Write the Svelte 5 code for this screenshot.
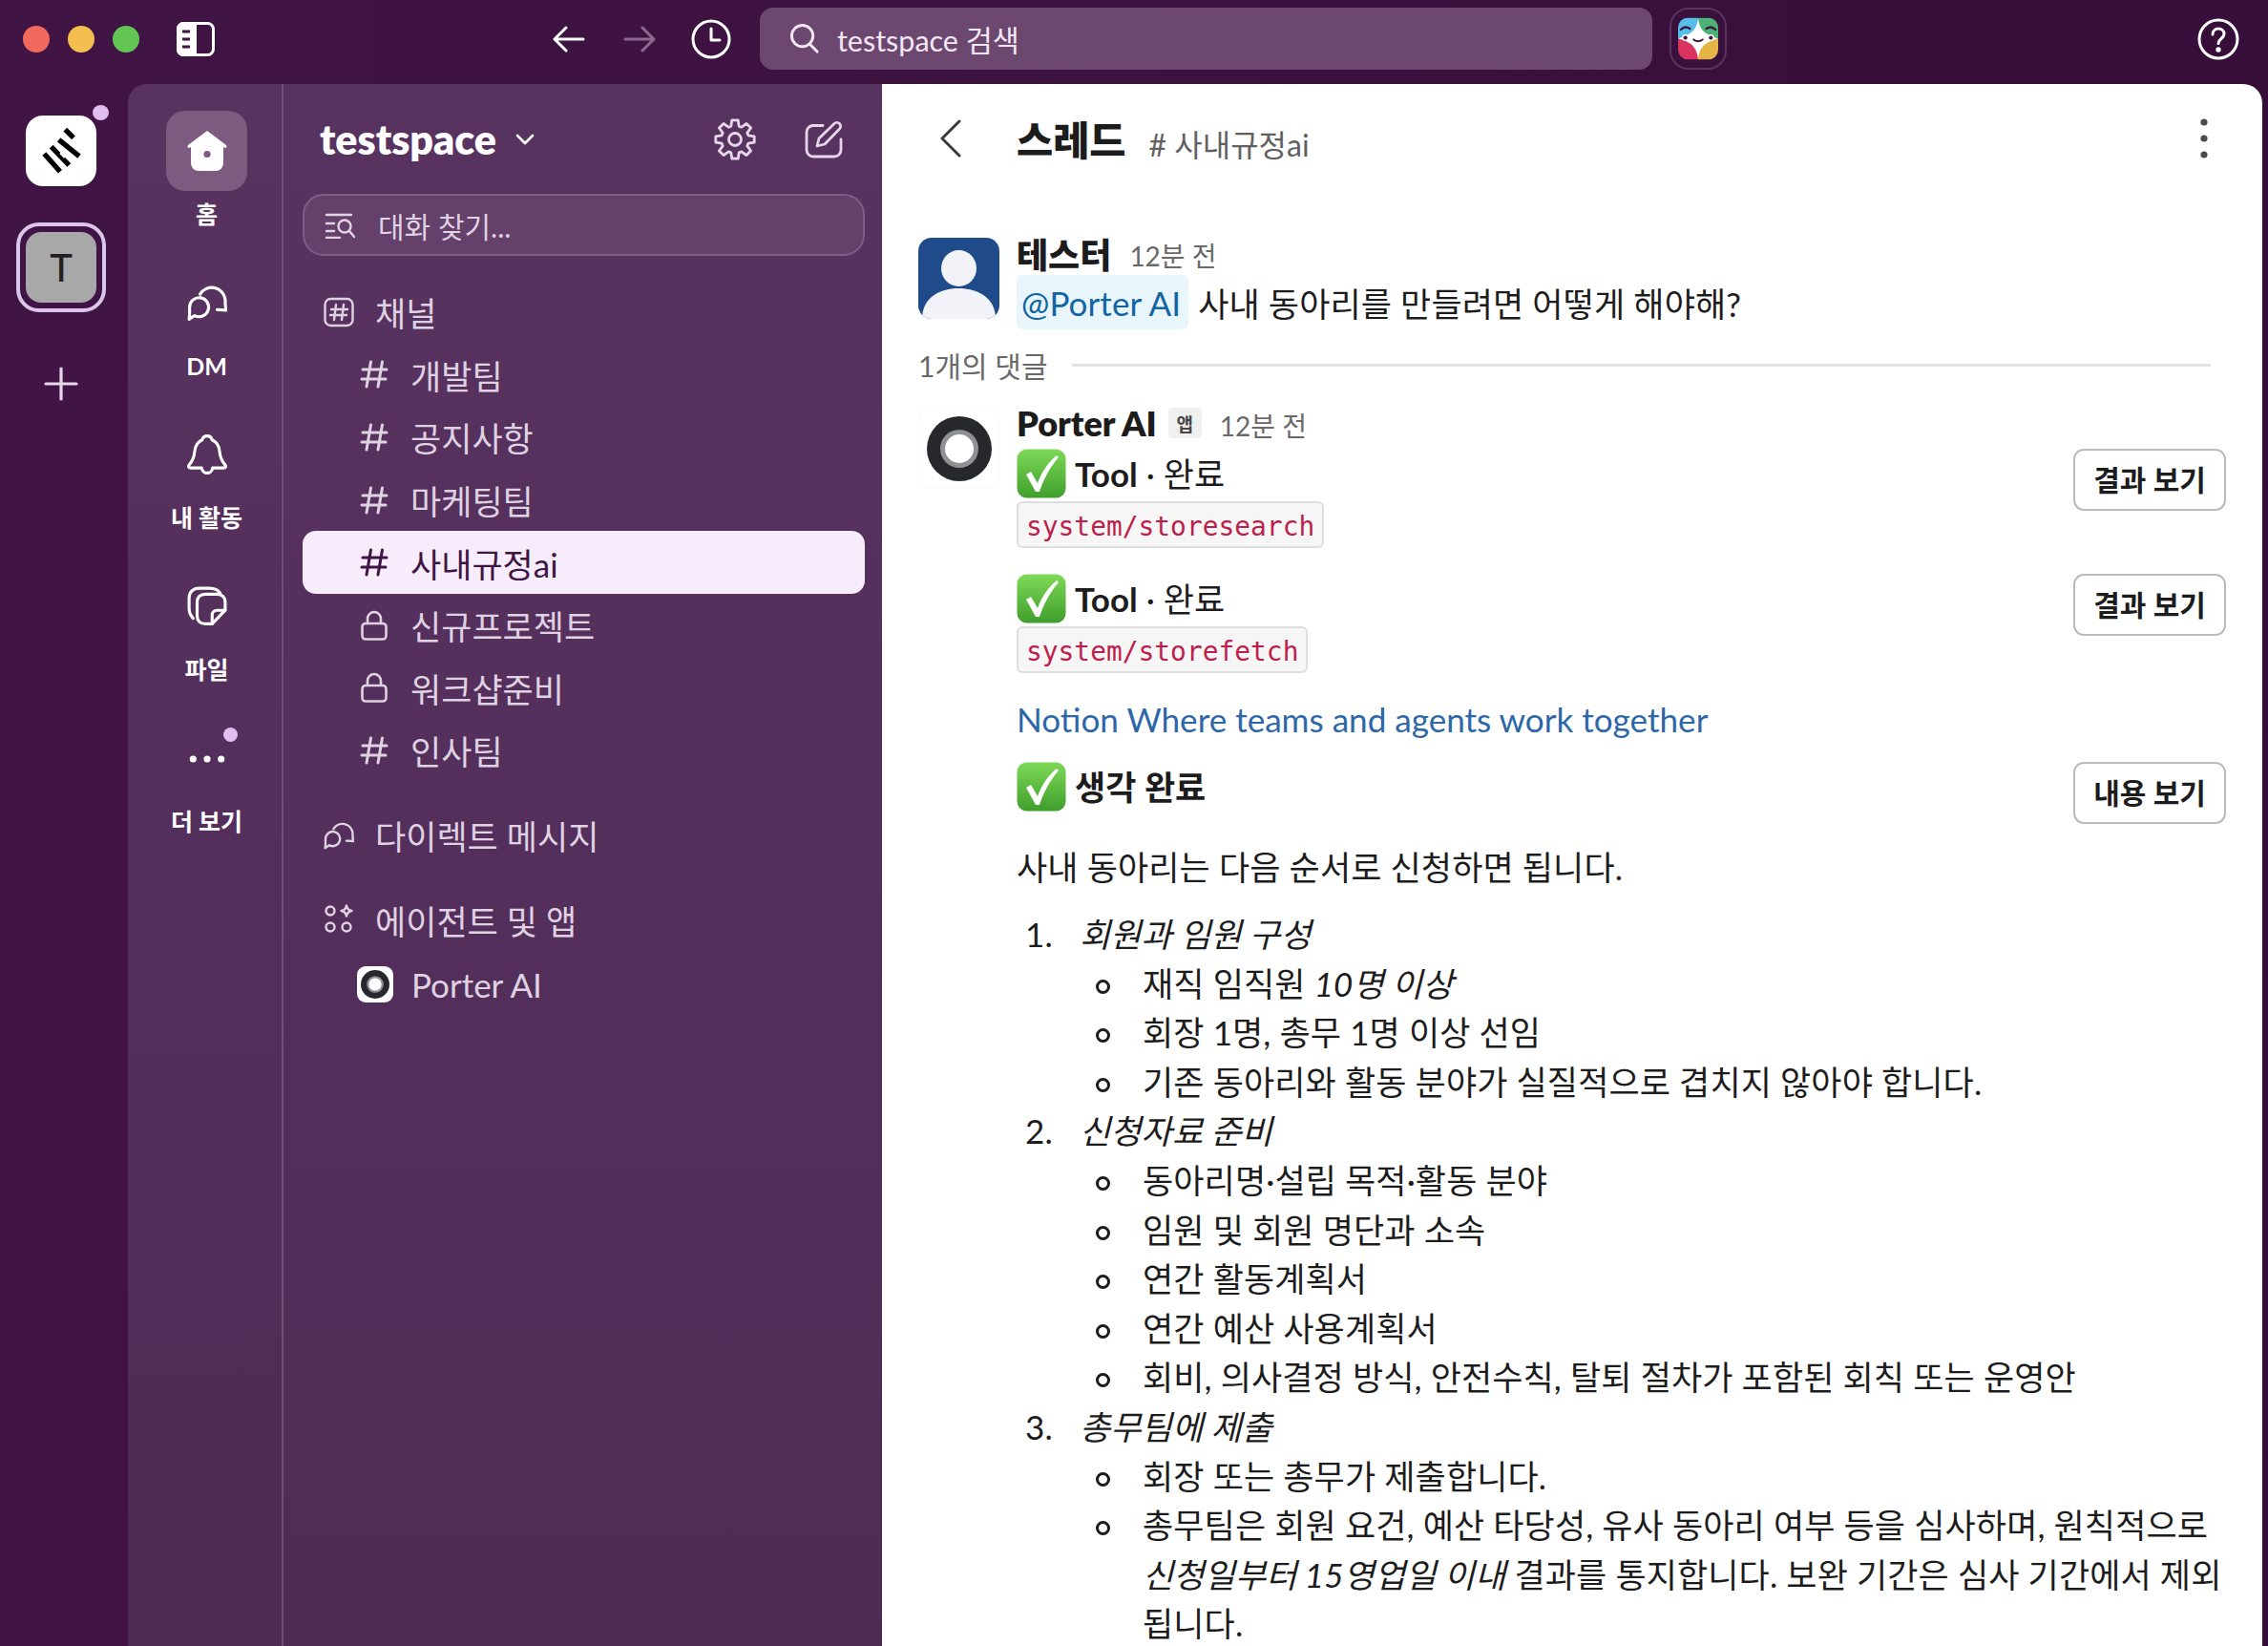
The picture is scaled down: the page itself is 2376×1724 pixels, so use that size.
<script>
    // Sidebar data
    const navItems = [
        { key: "home", label: "홈", active: true },
        { key: "dm", label: "DM" },
        { key: "bell", label: "내 활동" },
        { key: "files", label: "파일" },
        { key: "more", label: "더 보기" }
    ];

    const channels = [
        { name: "개발팀", icon: "hash" },
        { name: "공지사항", icon: "hash" },
        { name: "마케팅팀", icon: "hash" },
        { name: "사내규정ai", icon: "hash", active: true },
        { name: "신규프로젝트", icon: "lock" },
        { name: "워크샵준비", icon: "lock" },
        { name: "인사팀", icon: "hash" }
    ];

    const tools = ["system/storesearch", "system/storefetch"];

    const firstSub = ["회장 1명, 총무 1명 이상 선임", "기존 동아리와 활동 분야가 실질적으로 겹치지 않아야 합니다."];
    const secondSub = [
        "동아리명·설립 목적·활동 분야",
        "임원 및 회원 명단과 소속",
        "연간 활동계획서",
        "연간 예산 사용계획서",
        "회비, 의사결정 방식, 안전수칙, 탈퇴 절차가 포함된 회칙 또는 운영안"
    ];

    // Builds the 8 toothed outline of the settings gear
    const gearPath = () => {
        const point = (r, deg) => {
            const a = (deg * Math.PI) / 180;
            return `${(22 + r * Math.cos(a)).toFixed(1)} ${(22 + r * Math.sin(a)).toFixed(1)}`;
        };
        let d = "";
        for (let i = 0; i < 8; i++) {
            const c = i * 45;
            d += `${i ? "L" : "M"}${point(14.5, c - 17)}L${point(20.5, c - 9)}L${point(20.5, c + 9)}L${point(14.5, c + 17)}`;
        }
        return d + "Z";
    };
</script>

{#snippet check()}
    <svg class="check" viewBox="0 0 52 52">
        <defs>
            <linearGradient id="green" x1="0" y1="0" x2="0" y2="1">
                <stop offset="0" stop-color="#7ed957" />
                <stop offset="1" stop-color="#3f9e2c" />
            </linearGradient>
        </defs>
        <rect x="0.5" y="0.5" width="51" height="51" rx="10" fill="url(#green)" />
        <path d="M10 27l5-3 7 12C26 25 33 14 42 7l2 2C36 18 29 30 24 45h-4z" fill="#fff" />
    </svg>
{/snippet}

{#snippet icon(name)}
    {#if name === "hash"}
        <svg class="ico" viewBox="0 0 30 30" fill="none" stroke="currentColor" stroke-width="3" stroke-linecap="round">
            <path d="M11.500 2L7 28M23.500 2L19 28M3 10h25M2 20h25" />
        </svg>
    {:else if name === "lock"}
        <svg class="ico" viewBox="0 0 30 32" fill="none" stroke="currentColor" stroke-width="2.600" stroke-linejoin="round">
            <rect x="2.500" y="14" width="25" height="16.500" rx="3.500" />
            <path d="M8 14V9a7 7 0 0114 0v5" />
        </svg>
    {:else if name === "channels"}
        <svg class="ico" viewBox="0 0 32 32" fill="none" stroke="currentColor" stroke-width="2.400" stroke-linecap="round">
            <rect x="1.500" y="2" width="29" height="28" rx="6" />
            <path d="M13 8l-2 16M21 8l-2 16M8 13h17M7 19h17" />
        </svg>
    {:else if name === "dm"}
        <svg class="ico" viewBox="0 0 40 39" fill="none" stroke="currentColor" stroke-width="3" stroke-linecap="round" stroke-linejoin="round">
            <path d="M13 11A13.500 13.500 0 0138 16c0 4 0 8 1 11l-9-.5" />
            <path d="M2.500 24a9.500 9.500 0 115 8.400L2 36c.8-4 .5-8 .5-12z" />
        </svg>
    {:else if name === "agents"}
        <svg class="ico" viewBox="0 0 32 32" fill="none" stroke="currentColor" stroke-width="2.400">
            <circle cx="7" cy="7" r="4.500" />
            <circle cx="7" cy="24" r="4.500" />
            <circle cx="24" cy="24" r="4.500" />
            <path d="M24 1.500c.7 3.700 2 5 5.500 5.500-3.500.5-4.800 1.800-5.500 5.500-.7-3.700-2-5-5.500-5.500 3.500-.5 4.800-1.800 5.500-5.500z" stroke-linejoin="round" />
        </svg>
    {:else if name === "home"}
        <svg class="ico" viewBox="0 0 42 42">
            <path d="M21 0l20 15c1 1 .5 3-1 3l-2-1v16c0 5-3 9-8 9H12c-5 0-8-4-8-9V17l-2 1c-1.500 0-2-2-1-3z" fill="#fff" />
            <circle cx="21" cy="24.500" r="3.600" fill="#7d5a80" />
        </svg>
    {:else if name === "bell"}
        <svg class="ico" viewBox="0 0 40 40" fill="none" stroke="currentColor" stroke-width="3" stroke-linejoin="round" stroke-linecap="round">
            <path d="M20 1.500c3 0 4.500 2 5 4 5 2 7 6 7.500 12 .5 7 3 10 5.500 13 1 1.500.5 3-1.500 3H25.500c-.5 3-3 5-5.500 5s-5-2-5.500-5H3.500c-2 0-2.500-1.500-1.500-3 2.500-3 5-6 5.500-13C8 11.500 10 7.500 15 5.500c.5-2 2-4 5-4z" />
        </svg>
    {:else if name === "files"}
        <svg class="ico" viewBox="0 0 40 40" fill="none" stroke="currentColor" stroke-width="3" stroke-linejoin="round" stroke-linecap="round">
            <path d="M6 32c-3-3-4-6-4-10V12C2 6 6 2 12 2h10c5 0 9 1.500 11 5" />
            <path d="M18 8h12c5 0 8 3 8 8v8L25 37.500h-7c-5 0-8-3-8-8V16c0-5 3-8 8-8z" />
            <path d="M38 24h-8c-3 0-5 2-5 5v8.500" />
        </svg>
    {:else if name === "more"}
        <svg class="ico" viewBox="0 0 40 40" fill="#fff">
            <circle cx="6" cy="21" r="3.400" />
            <circle cx="20" cy="21" r="3.400" />
            <circle cx="34" cy="21" r="3.400" />
        </svg>
    {/if}
{/snippet}

{#snippet tire(size)}
    <svg viewBox="0 0 68 68" width={size} height={size}>
        <circle cx="34" cy="34" r="34" fill="#26282c" />
        <circle cx="34" cy="34" r="20" fill="#8f9194" />
        <circle cx="34" cy="34" r="15" fill="#fff" />
    </svg>
{/snippet}

<div class="window">
    <header class="titlebar">
        <div class="lights">
            <span class="light red"></span>
            <span class="light yellow"></span>
            <span class="light green"></span>
        </div>
        <svg class="panel-toggle" viewBox="0 0 40 36">
            <rect x="1.500" y="1.500" width="37" height="33" rx="6" fill="none" stroke="#fff" stroke-width="3" />
            <path d="M7 0h14v36H7a7 7 0 01-7-7V7a7 7 0 017-7z" fill="#fff" />
            <path d="M6 10h8M6 18h8M6 26h8" stroke="#3f1543" stroke-width="3" />
        </svg>
        <svg class="nav-arrow" viewBox="0 0 34 28" fill="none" stroke="#fff" stroke-width="3" stroke-linecap="round" stroke-linejoin="round">
            <path d="M32 14H3M14 2L2 14l12 12" />
        </svg>
        <svg class="nav-arrow forward" viewBox="0 0 34 28" fill="none" stroke="#8a6a8e" stroke-width="3" stroke-linecap="round" stroke-linejoin="round">
            <path d="M2 14h29M20 2l12 12-12 12" />
        </svg>
        <svg class="history" viewBox="0 0 42 42" fill="none" stroke="#fff" stroke-width="3" stroke-linecap="round" stroke-linejoin="round">
            <circle cx="21" cy="21" r="19" />
            <path d="M21 10v12h9" />
        </svg>
        <div class="global-search">
            <svg viewBox="0 0 34 34" fill="none" stroke="#f3e8f4" stroke-width="3" stroke-linecap="round">
                <circle cx="15" cy="14" r="11.500" />
                <path d="M23 23l8 8" />
            </svg>
            <span>testspace 검색</span>
        </div>
        <div class="app-logo">
            <svg viewBox="0 0 44 46">
                <defs>
                    <clipPath id="tile"><rect width="44" height="46" rx="11" /></clipPath>
                </defs>
                <g clip-path="url(#tile)">
                    <rect width="22" height="23" fill="#55bde8" />
                    <rect x="22" width="22" height="23" fill="#4bb174" />
                    <rect y="23" width="22" height="23" fill="#d9335f" />
                    <rect x="22" y="23" width="22" height="23" fill="#e4b544" />
                    <path d="M22 0c1 11 5 18 22 23-17 4-21 12-22 23-1-11-5-19-22-23C17 18 21 11 22 0z" fill="#fff" />
                    <path d="M3 13c3-3 7-3 10-1M31 12c3-2 7-2 10 1" fill="none" stroke="#3b1440" stroke-width="2.400" stroke-linecap="round" />
                    <circle cx="8" cy="22" r="3.600" fill="#fff" />
                    <circle cx="36" cy="22" r="3.600" fill="#fff" />
                    <circle cx="8" cy="22" r="2.200" fill="#3b1440" />
                    <circle cx="36" cy="22" r="2.200" fill="#3b1440" />
                    <path d="M17 24c2 2.500 8 2.500 10 0" fill="none" stroke="#3b1440" stroke-width="2" stroke-linecap="round" />
                </g>
            </svg>
        </div>
        <svg class="help" viewBox="0 0 44 44" fill="none" stroke="#fff" stroke-width="3" stroke-linecap="round">
            <circle cx="22" cy="22" r="20" />
            <path d="M16 17c0-4 3-6 6-6s6 2 6 5.500c0 5-6 5-6 10" />
            <circle cx="22" cy="33" r="1.200" fill="#fff" />
        </svg>
    </header>

    <div class="body">
        <aside class="workspaces">
            <div class="ws-logo">
                <svg viewBox="0 0 130 150" fill="none" stroke="#000" stroke-width="16">
                    <path d="M12 84l50 56M34 62l56 58M58 40l64 52M78 8l26 26" />
                    <path d="M60 84l14-14 14 14-14 14z" fill="#fff" stroke="none" />
                </svg>
                <span class="ws-dot"></span>
            </div>
            <div class="ws-selected"><span class="ws-t">T</span></div>
            <svg class="ws-add" viewBox="0 0 36 36" fill="none" stroke="#e6d8ea" stroke-width="3.200" stroke-linecap="round">
                <path d="M18 2v32M2 18h32" />
            </svg>
        </aside>

        <nav class="rail">
            {#each navItems as item}
                <div class="rail-item">
                    <div class="rail-btn" class:active={item.active}>
                        {@render icon(item.key)}
                        {#if item.key === "more"}<span class="more-dot"></span>{/if}
                    </div>
                    <span class="rail-label">{item.label}</span>
                </div>
            {/each}
        </nav>

        <section class="sidebar">
            <div class="side-head">
                <span class="team">testspace</span>
                <svg class="team-chevron" viewBox="0 0 20 12" fill="none" stroke="#fff" stroke-width="2.600" stroke-linecap="round" stroke-linejoin="round">
                    <path d="M2 2l8 8 8-8" />
                </svg>
                <svg class="gear" viewBox="0 0 44 44" fill="none" stroke="#e6d8ea" stroke-width="2.800" stroke-linejoin="round">
                    <path d={gearPath()} />
                    <circle cx="22" cy="22" r="6.500" />
                </svg>
                <svg class="compose" viewBox="0 0 40 40" fill="none" stroke="#e6d8ea" stroke-width="2.800" stroke-linecap="round" stroke-linejoin="round">
                    <path d="M19 5.500H9a7 7 0 00-7 7V31a7 7 0 007 7h22a7 7 0 007-7V20" />
                    <path d="M13 27l2-8L31 3.500a3.500 3.500 0 015.500 5.500L21 25z" />
                </svg>
            </div>
            <div class="side-search">
                <svg viewBox="0 0 34 28" fill="none" stroke="#e0d3e3" stroke-width="2.400" stroke-linecap="round">
                    <path d="M2 3h26M2 12h8M2 20h8M2 27h14" />
                    <circle cx="21" cy="15" r="6.500" />
                    <path d="M26 20l5 6" />
                </svg>
                <span>대화 찾기...</span>
            </div>

            <div class="row section">
                {@render icon("channels")}
                <span>채널</span>
            </div>
            {#each channels as ch}
                <div class="row channel" class:active={ch.active}>
                    {@render icon(ch.icon)}
                    <span>{ch.name}</span>
                </div>
            {/each}
            <div class="row section gap">
                {@render icon("dm")}
                <span>다이렉트 메시지</span>
            </div>
            <div class="row section gap">
                {@render icon("agents")}
                <span>에이전트 및 앱</span>
            </div>
            <div class="row channel porter">
                <span class="porter-ico">{@render tire(30)}</span>
                <span>Porter AI</span>
            </div>
        </section>

        <main class="thread">
            <div class="thread-head">
                <svg class="back" viewBox="0 0 22 40" fill="none" stroke="#3c3c3c" stroke-width="3" stroke-linecap="round" stroke-linejoin="round">
                    <path d="M20 2L2 20l18 18" />
                </svg>
                <h1>스레드</h1>
                <span class="thread-channel"># 사내규정ai</span>
                <svg class="kebab" viewBox="0 0 10 42" fill="#4a4a4a">
                    <circle cx="5" cy="4" r="3.600" />
                    <circle cx="5" cy="21" r="3.600" />
                    <circle cx="5" cy="38" r="3.600" />
                </svg>
            </div>

            <article class="msg first">
                <div class="avatar user">
                    <svg viewBox="0 0 85 85">
                        <rect width="85" height="85" fill="#1f4b8a" />
                        <ellipse cx="42.500" cy="32" rx="18.500" ry="19" fill="#f2f3f8" />
                        <path d="M4 85c0-22 18-32 38.500-32S81 63 81 85z" fill="#f2f3f8" />
                    </svg>
                </div>
                <div class="msg-body">
                    <div class="meta"><strong>테스터</strong><time>12분 전</time></div>
                    <div class="question"><span class="mention">@Porter AI</span><span>사내 동아리를 만들려면 어떻게 해야해?</span></div>
                </div>
            </article>

            <div class="replies"><span>1개의 댓글</span><i></i></div>

            <article class="msg">
                <div class="avatar bot">{@render tire(68)}</div>
                <div class="msg-body">
                    <div class="meta"><strong>Porter AI</strong><span class="app-badge">앱</span><time>12분 전</time></div>
                    {#each tools as tool}
                        <div class="block">
                            <div class="block-left">
                                <div class="status">{@render check()}<span><b>Tool</b> · 완료</span></div>
                                <code>{tool}</code>
                            </div>
                            <button>결과 보기</button>
                        </div>
                    {/each}
                    <a class="link" href="#top">Notion Where teams and agents work together</a>
                    <div class="block thinking">
                        <div class="status">{@render check()}<strong>생각 완료</strong></div>
                        <button>내용 보기</button>
                    </div>
                    <p class="answer">사내 동아리는 다음 순서로 신청하면 됩니다.</p>
                    <ol>
                        <li>
                            <em>회원과 임원 구성</em>
                            <ul>
                                <li>재직 임직원 <em>10명 이상</em></li>
                                {#each firstSub as text}<li>{text}</li>{/each}
                            </ul>
                        </li>
                        <li>
                            <em>신청자료 준비</em>
                            <ul>
                                {#each secondSub as text}<li>{text}</li>{/each}
                            </ul>
                        </li>
                        <li>
                            <em>총무팀에 제출</em>
                            <ul>
                                <li>회장 또는 총무가 제출합니다.</li>
                                <li>총무팀은 회원 요건, 예산 타당성, 유사 동아리 여부 등을 심사하며, 원칙적으로<br /><em>신청일부터 15영업일 이내</em> 결과를 통지합니다. 보완 기간은 심사 기간에서 제외<br />됩니다.</li>
                            </ul>
                        </li>
                    </ol>
                </div>
            </article>
        </main>
    </div>
</div>

<style>
    :global(body) {
        margin: 0;
        background: #3f1543;
    }

    .window {
        width: 2376px;
        height: 1724px;
        display: flex;
        flex-direction: column;
        overflow: hidden;
        background: linear-gradient(90deg, #401545, #370d39);
        font-family: Lato, "Noto Sans CJK KR", sans-serif;
        font-size: 35px;
        color: #1d1c1d;
    }

    /* title bar */
    .titlebar {
        height: 88px;
        box-sizing: border-box;
        padding-bottom: 7px;
        flex: none;
        display: flex;
        align-items: center;
    }

    .lights {
        display: flex;
        gap: 19px;
        margin-left: 24px;
    }

    .light {
        width: 28px;
        height: 28px;
        border-radius: 50%;
    }

    .red { background: #f0695c; }
    .yellow { background: #f5bf4f; }
    .green { background: #62c554; }

    .panel-toggle {
        width: 40px;
        height: 36px;
        margin-left: 39px;
    }

    .nav-arrow {
        width: 34px;
        height: 28px;
        margin-left: 354px;
    }

    .nav-arrow.forward {
        margin-left: 40px;
    }

    .history {
        width: 42px;
        height: 42px;
        margin-left: 37px;
    }

    .global-search {
        width: 935px;
        height: 65px;
        margin-left: 30px;
        display: flex;
        align-items: center;
        gap: 18px;
        padding-left: 30px;
        box-sizing: border-box;
        background: #6c4770;
        border-radius: 14px;
        color: #f3e8f4;
        font-size: 30.500px;
    }

    .global-search svg {
        width: 33px;
        height: 33px;
    }

    .app-logo {
        width: 60px;
        height: 65px;
        box-sizing: border-box;
        margin-left: 18px;
        border: 2px solid #56345b;
        border-radius: 20px;
        display: flex;
        align-items: center;
        justify-content: center;
    }

    .app-logo svg {
        width: 42px;
        height: 45px;
    }

    .help {
        width: 44px;
        height: 44px;
        margin-left: auto;
        margin-right: 30px;
    }

    .body {
        flex: 1;
        display: flex;
        min-height: 0;
    }

    /* workspace rail */
    .workspaces {
        width: 134px;
        flex: none;
        display: flex;
        flex-direction: column;
        align-items: center;
        padding: 33px 6px 0 0;
        box-sizing: border-box;
    }

    .ws-logo {
        position: relative;
        width: 74px;
        height: 74px;
        background: #fff;
        border-radius: 18px;
        display: flex;
        align-items: center;
        justify-content: center;
    }

    .ws-logo svg {
        width: 44px;
        height: 50px;
    }

    .ws-dot {
        position: absolute;
        top: -11px;
        right: -13px;
        width: 17px;
        height: 16px;
        border-radius: 50%;
        background: #e2bdf0;
    }

    .ws-selected {
        width: 94px;
        height: 94px;
        box-sizing: border-box;
        margin-top: 38px;
        border: 4px solid #dcc6e8;
        border-radius: 24px;
        padding: 6px;
    }

    .ws-t {
        display: flex;
        align-items: center;
        justify-content: center;
        height: 100%;
        background: #a8a8a8;
        border-radius: 16px;
        font-size: 40px;
        font-weight: 500;
        color: #222;
    }

    .ws-add {
        width: 36px;
        height: 36px;
        margin-top: 57px;
    }

    /* nav rail and channel list */
    .rail {
        width: 163px;
        flex: none;
        box-sizing: border-box;
        padding: 28px 0 0 4px;
        display: flex;
        flex-direction: column;
        align-items: center;
        background: linear-gradient(180deg, #583360, #4f2a55);
        border-right: 2px solid #6f4f75;
        border-top-left-radius: 20px;
    }

    .rail-item {
        height: 159px;
        display: flex;
        flex-direction: column;
        align-items: center;
    }

    .rail-btn {
        position: relative;
        width: 85px;
        height: 84px;
        border-radius: 20px;
        display: flex;
        align-items: center;
        justify-content: center;
        color: #fff;
    }

    .rail-btn.active {
        background: #7d5a80;
    }

    .rail-btn .ico {
        width: 42px;
        height: 42px;
    }

    .more-dot {
        position: absolute;
        top: 10px;
        right: 10px;
        width: 15px;
        height: 15px;
        border-radius: 50%;
        background: #e2bdf0;
    }

    .rail-label {
        margin-top: 8px;
        font-size: 25px;
        line-height: 32px;
        font-weight: 700;
        color: #fff;
    }

    .sidebar {
        width: 627px;
        flex: none;
        box-sizing: border-box;
        padding: 0 18px 0 20px;
        background: linear-gradient(180deg, #583360, #502b56);
        color: #dfd2e2;
    }

    .side-head {
        height: 115px;
        display: flex;
        align-items: center;
        padding-left: 18px;
    }

    .team {
        font-size: 43px;
        font-weight: 800;
        color: #fff;
    }

    .team-chevron {
        width: 20px;
        height: 12px;
        margin-left: 20px;
    }

    .gear {
        width: 44px;
        height: 44px;
        margin-left: auto;
    }

    .compose {
        width: 40px;
        height: 40px;
        margin: 0 23px 0 51px;
    }

    .side-search {
        height: 65px;
        box-sizing: border-box;
        display: flex;
        align-items: center;
        gap: 22px;
        padding-left: 21px;
        background: #65406b;
        border: 2px solid #7f5d87;
        border-radius: 22px;
        font-size: 30px;
        margin-bottom: 26px;
    }

    .side-search svg {
        width: 34px;
        height: 28px;
    }

    .row {
        height: 65.6px;
        display: flex;
        align-items: center;
        font-size: 35px;
    }

    .row .ico {
        flex: none;
    }

    .section {
        padding-left: 22px;
        gap: 22px;
    }

    .section .ico {
        width: 32px;
        height: 32px;
    }

    .section.gap {
        margin-top: 23px;
    }

    .channel {
        padding-left: 60px;
        gap: 23px;
        border-radius: 14px;
    }

    .channel .ico {
        width: 30px;
        height: 32px;
    }

    .channel.active {
        background: #f6ecfb;
        color: #3f1543;
    }

    .porter {
        margin-top: 2px;
        padding-left: 57px;
        gap: 19px;
    }

    .porter-ico {
        width: 38px;
        height: 38px;
        flex: none;
        background: #fff;
        border-radius: 9px;
        display: flex;
        align-items: center;
        justify-content: center;
    }

    /* thread */
    .thread {
        flex: 1;
        margin-right: 6px;
        min-width: 0;
        background: #fff;
        border-top-right-radius: 20px;
        box-sizing: border-box;
        padding: 0 38px;
        overflow: hidden;
    }

    .thread-head {
        height: 114px;
        display: flex;
        align-items: center;
        margin-left: 23px;
    }

    .back {
        width: 22px;
        height: 40px;
    }

    .thread-head h1 {
        margin: 0 0 0 58px;
        font-size: 41.500px;
        font-weight: 800;
    }

    .thread-channel {
        margin: 9px 0 0 24px;
        font-size: 32px;
        color: #616061;
    }

    .kebab {
        width: 10px;
        height: 42px;
        margin-left: auto;
        margin-right: 18px;
    }

    .msg {
        display: flex;
        gap: 18px;
    }

    .msg.first {
        margin-top: 47px;
    }

    .avatar {
        width: 85px;
        height: 85px;
        flex: none;
        border-radius: 14px;
        overflow: hidden;
    }

    .avatar svg {
        display: block;
    }

    .avatar.bot {
        display: flex;
        align-items: center;
        justify-content: center;
        box-shadow: inset 0 0 0 1px #f8f8f8;
    }

    .msg-body {
        flex: 1;
        min-width: 0;
    }

    .meta {
        height: 36px;
        display: flex;
        align-items: center;
    }

    .meta strong {
        margin-top: -4px;
        font-size: 36px;
        font-weight: 800;
    }

    .meta time {
        margin-left: 19px;
        font-size: 28px;
        color: #696969;
    }

    .app-badge {
        margin-left: 12px;
        width: 35px;
        height: 32px;
        margin-top: -4px;
        display: flex;
        align-items: center;
        justify-content: center;
        background: #f0f0f0;
        border-radius: 4px;
        font-size: 19px;
        font-weight: 700;
        color: #454545;
    }

    .app-badge + time {
        margin-left: 19px;
    }

    .question {
        display: flex;
        align-items: center;
        height: 57px;
        margin-top: 3px;
        letter-spacing: 0.1px;
    }

    .mention {
        display: flex;
        align-items: center;
        height: 100%;
        padding: 0 8px 0 5px;
        margin-right: 10px;
        background: #e8f5fa;
        border-radius: 6px;
        color: #1264a3;
    }

    .replies {
        display: flex;
        align-items: center;
        gap: 26px;
        height: 40px;
        margin-top: 17px;
        font-size: 30px;
        color: #696969;
    }

    .replies i {
        width: 1193px;
        height: 3px;
        background: #e2e2e2;
    }

    .replies + .msg {
        margin-top: 25px;
    }

    .block {
        display: flex;
        justify-content: space-between;
        align-items: flex-start;
        margin-top: 7px;
    }

    .block + .block {
        margin-top: 27px;
    }

    .block-left {
        display: flex;
        flex-direction: column;
        align-items: flex-start;
        gap: 4px;
    }

    .status {
        display: flex;
        align-items: center;
        gap: 9px;
        height: 51px;
    }

    .status span,
    .status strong {
        margin-top: -3px;
    }

    .status b {
        font-weight: 700;
    }

    .check {
        width: 52px;
        height: 52px;
        flex: none;
    }

    code {
        display: flex;
        align-items: center;
        height: 49px;
        box-sizing: border-box;
        padding: 4px 8px 0;
        background: #f6f6f6;
        border: 2px solid #dedede;
        border-radius: 6px;
        font-family: "DejaVu Sans Mono", monospace;
        font-size: 27.900px;
        color: #bd1f4c;
    }

    button {
        width: 160px;
        height: 65px;
        padding: 0 0 4px;
        background: #fff;
        border: 2px solid #bbb;
        border-radius: 11px;
        font: 700 30px Lato, "Noto Sans CJK KR", sans-serif;
        color: #1d1c1d;
    }

    .link {
        display: block;
        margin-top: 22px;
        line-height: 52px;
        font-size: 35.100px;
        color: #2d67a8;
        text-decoration: none;
    }

    .block.thinking {
        margin-top: 19px;
    }

    .answer {
        margin: 19px 0 19px;
        line-height: 52px;
        letter-spacing: 0.1px;
    }

    ol,
    ul {
        margin: 0;
        padding: 0;
        list-style: none;
    }

    ol {
        counter-reset: step;
        letter-spacing: 0.1px;
    }

    ol > li {
        position: relative;
        counter-increment: step;
        padding-left: 66px;
        line-height: 51.6px;
    }

    ol > li::before {
        content: counter(step) ".";
        position: absolute;
        left: 9px;
    }

    ul > li {
        position: relative;
        padding-left: 66px;
    }

    ul > li::before {
        content: "";
        position: absolute;
        left: 17px;
        top: 21px;
        width: 9px;
        height: 9px;
        border: 3px solid #1d1c1d;
        border-radius: 50%;
    }
</style>
